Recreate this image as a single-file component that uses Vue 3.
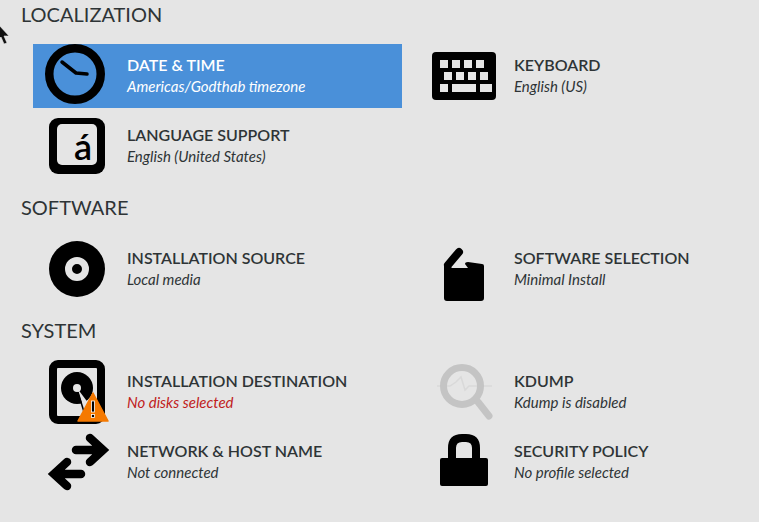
<script setup>
const sections = [
  {
    name: 'LOCALIZATION',
    items: [
      { icon: 'clock', title: 'DATE & TIME', sub: 'Americas/Godthab timezone', selected: true },
      { icon: 'keyboard', title: 'KEYBOARD', sub: 'English (US)' },
      { icon: 'language', title: 'LANGUAGE SUPPORT', sub: 'English (United States)' }
    ]
  },
  {
    name: 'SOFTWARE',
    items: [
      { icon: 'disc', title: 'INSTALLATION SOURCE', sub: 'Local media' },
      { icon: 'box', title: 'SOFTWARE SELECTION', sub: 'Minimal Install' }
    ]
  },
  {
    name: 'SYSTEM',
    items: [
      { icon: 'disk', title: 'INSTALLATION DESTINATION', sub: 'No disks selected', error: true },
      { icon: 'kdump', title: 'KDUMP', sub: 'Kdump is disabled' },
      { icon: 'network', title: 'NETWORK & HOST NAME', sub: 'Not connected' },
      { icon: 'lock', title: 'SECURITY POLICY', sub: 'No profile selected' }
    ]
  }
]
</script>

<template>
  <div class="hub">
    <svg class="cursor" viewBox="0 0 12 20" width="12" height="20">
      <path d="M-2 0 L9 12 L4 12 L7 19 L4 20 L1 13 L-2 16 Z" fill="#111" stroke="#eee" stroke-width="0.6" />
    </svg>

    <section v-for="section in sections" :key="section.name" class="section">
      <h2>{{ section.name }}</h2>
      <div class="grid">
        <div
          v-for="item in section.items"
          :key="item.title"
          class="spoke"
          :class="{ selected: item.selected }"
        >
          <svg class="icon" viewBox="0 0 64 64" width="64" height="64">
            <g v-if="item.icon === 'clock'">
              <circle cx="30" cy="30" r="25.75" fill="none" stroke="#000" stroke-width="8.5" />
              <path d="M17 18 L31 29 L42 30" fill="none" stroke="#000" stroke-width="3.5" stroke-linecap="round" stroke-linejoin="round" />
            </g>
            <g v-else-if="item.icon === 'keyboard'">
              <rect x="0" y="8" width="64" height="48" rx="4" fill="#000" />
              <g fill="#e5e5e5">
                <rect x="8" y="16" width="8" height="8" />
                <rect x="20" y="16" width="8" height="8" />
                <rect x="32" y="16" width="8" height="8" />
                <rect x="44" y="16" width="8" height="8" />
                <rect x="12" y="28" width="8" height="8" />
                <rect x="24" y="28" width="8" height="8" />
                <rect x="36" y="28" width="8" height="8" />
                <rect x="48" y="28" width="8" height="8" />
                <rect x="8" y="40" width="8" height="8" />
                <rect x="20" y="40" width="24" height="8" />
                <rect x="48" y="40" width="12" height="8" />
              </g>
            </g>
            <g v-else-if="item.icon === 'language'">
              <rect x="4" y="4" width="56" height="56" rx="9" fill="#000" />
              <rect x="12" y="10" width="40" height="41" rx="5" fill="#e5e5e5" />
              <text x="38" y="46" class="glyph" text-anchor="middle">á</text>
            </g>
            <g v-else-if="item.icon === 'disc'">
              <circle cx="32" cy="32" r="28" fill="#000" />
              <circle cx="32" cy="32" r="8.5" fill="none" stroke="#e5e5e5" stroke-width="7" />
            </g>
            <g v-else-if="item.icon === 'box'">
              <path d="M16 28 L27 15" fill="none" stroke="#000" stroke-width="8" stroke-linecap="round" />
              <path d="M12 29 L12 61 Q12 64 15 64 L49 64 Q52 64 52 61 L52 29 Q52 27 50 27 L36 25 Q33 25 33 27 L36 31 L20 31 L15 26 Z" fill="#000" />
            </g>
            <g v-else-if="item.icon === 'disk'">
              <rect x="8" y="4" width="48" height="56" rx="5" fill="none" stroke="#000" stroke-width="8" />
              <circle cx="32" cy="28" r="16" fill="#000" />
              <path d="M32 28 L40 52 L44 44 Z" fill="#e5e5e5" />
              <path d="M33 32 L39 52" stroke="#000" stroke-width="1.5" />
              <circle cx="32" cy="28" r="4" fill="#e5e5e5" />
              <path d="M48 33 L63 61 L33 61 Z" fill="#f57900" stroke="#f57900" stroke-width="1.5" stroke-linejoin="round" />
              <rect x="46.5" y="41" width="3" height="11" fill="#000" stroke="#fff" stroke-width="0.8" />
              <rect x="46.5" y="54.5" width="3" height="3" fill="#000" stroke="#fff" stroke-width="0.8" />
            </g>
            <g v-else-if="item.icon === 'kdump'">
              <path d="M5 26 H18 L24 22 L29 17 L33 30 L37 26 H60" fill="none" stroke="#d9d9d9" stroke-width="1.5" />
              <circle cx="30" cy="26" r="18.5" fill="none" stroke="#c4c4c4" stroke-width="7" />
              <path d="M46 42 L57 56" fill="none" stroke="#c4c4c4" stroke-width="7" stroke-linecap="round" />
            </g>
            <g v-else-if="item.icon === 'network'">
              <path d="M31 20 H57 M45 8 L58 20 L45 32" fill="none" stroke="#000" stroke-width="8.5" stroke-linecap="round" />
              <path d="M36 44 H10 M22 32 L9 44 L22 56" fill="none" stroke="#000" stroke-width="8.5" stroke-linecap="round" />
            </g>
            <g v-else-if="item.icon === 'lock'">
              <rect x="8" y="28" width="48" height="28" rx="2" fill="#000" />
              <path d="M20 30 V18 Q20 8 30 8 H34 Q44 8 44 18 V30" fill="none" stroke="#000" stroke-width="8" />
            </g>
          </svg>
          <div class="text">
            <div class="title">{{ item.title }}</div>
            <div class="sub" :class="{ error: item.error }">{{ item.sub }}</div>
          </div>
        </div>
      </div>
    </section>
  </div>
</template>

<style>
html,
body {
  margin: 0;
  background: #e5e5e5;
}
</style>

<style scoped>
.hub {
  position: relative;
  width: 759px;
  height: 522px;
  overflow: hidden;
  background: #e5e5e5;
  color: #2e3436;
  font-family: Lato, sans-serif;
}
.cursor {
  position: absolute;
  left: 0;
  top: 24px;
}
.section {
  padding-bottom: 15px;
}
h2 {
  margin: 0 0 16px 21px;
  height: 28px;
  line-height: 28px;
  font-size: 20px;
  font-weight: 400;
}
.grid {
  display: grid;
  grid-template-columns: 369px 339px;
  column-gap: 18px;
  row-gap: 6px;
  margin-left: 33px;
}
.spoke {
  display: flex;
  align-items: center;
  height: 64px;
}
.selected {
  background: #4a90d9;
  color: #fff;
}
.icon {
  flex: none;
  margin-left: 12px;
  margin-right: 18px;
  overflow: visible;
}
.text {
  display: flex;
  flex-direction: column;
  gap: 1px;
}
.title {
  font-size: 16px;
  line-height: 20px;
  font-weight: 600;
}
.sub {
  font-size: 15px;
  line-height: 21px;
  font-style: italic;
}
.error {
  color: #c01c1c;
}
.glyph {
  font-size: 36px;
  font-weight: 600;
  fill: #000;
}
</style>
